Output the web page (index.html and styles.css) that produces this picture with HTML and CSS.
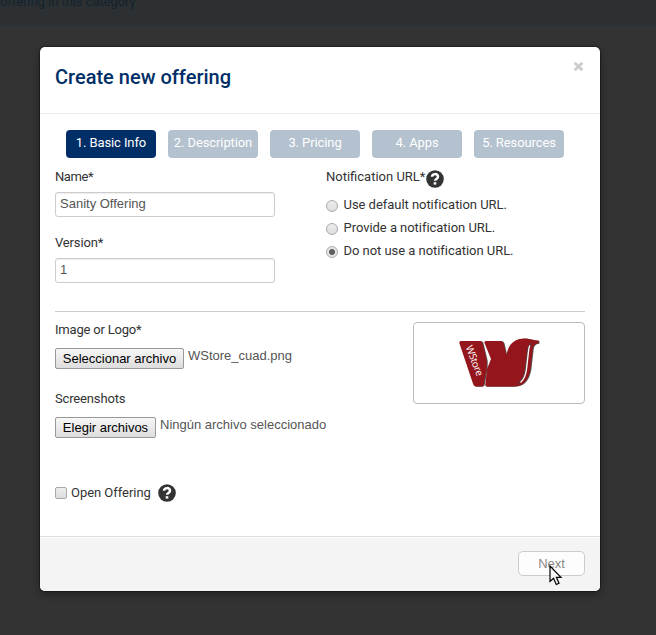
FILE: index.html
```html
<!DOCTYPE html>
<html lang="en">
<head>
<meta charset="utf-8">
<title>Create new offering</title>
<link rel="stylesheet" href="styles.css">
</head>
<body>
<div class="page-banner">offering in this category</div>
<div class="page-panel"></div>
<section class="modal">
  <header class="modal-header">
    <h3>Create new offering</h3>
    <svg class="close" viewBox="0 0 10 10"><path d="M1.5 1.5 8.5 8.5M8.5 1.5 1.5 8.5"/></svg>
  </header>
  <div class="modal-body">
    <nav class="steps">
      <span class="step active">1. Basic Info</span>
      <span class="step description">2. Description</span>
      <span class="step">3. Pricing</span>
      <span class="step">4. Apps</span>
      <span class="step">5. Resources</span>
    </nav>
    <div class="columns">
      <div class="fields">
        <div class="label tight">Name*</div>
        <div class="input">Sanity Offering</div>
        <div class="label">Version*</div>
        <div class="input">1</div>
      </div>
      <div class="notification">
        <div class="label with-help"><span class="notify-label">Notification URL*</span><svg class="help" viewBox="0 0 18 18"><circle cx="9" cy="9" r="8.8"/><path d="M6 6.8C6.2 3.3 12 3.2 12 6.7 12 8.9 9 8.9 9 10.8"/><rect x="7.7" y="12.2" width="2.6" height="2.4"/></svg></div>
        <div class="option"><i class="radio"></i><span>Use default notification URL.</span></div>
        <div class="option"><i class="radio"></i><span>Provide a notification URL.</span></div>
        <div class="option"><i class="radio checked"></i><span>Do not use a notification URL.</span></div>
      </div>
    </div>
    <div class="columns media">
      <div class="files">
        <div class="label image-label">Image or Logo*</div>
        <div class="file"><span class="file-button choose">Seleccionar archivo</span><span class="file-name">WStore_cuad.png</span></div>
        <div class="label shots-label">Screenshots</div>
        <div class="file"><span class="file-button pick">Elegir archivos</span><span class="file-name">Ningún archivo seleccionado</span></div>
      </div>
      <div class="preview">
        <svg viewBox="0 0 170 80">
          <defs>
            <g id="mark">
              <path d="M45.300 20Q45 18 47 18H66Q68 18 68.600 20L72.800 37.500V44L70 61Q69.600 63.500 67.500 63.500H62Q60 63.500 59.200 61.200Z"/>
              <path d="M70.500 20Q70 18 72 18H86.500Q89 18 89.600 20L92.500 32.500C94 21 101 15.500 110 15.500 116 15.500 119 17.500 124.500 17.500V20.500Q119.500 20.500 118.800 26L116.500 46C114.500 58 109 63.500 99 63.500H73Q71 63.500 71.300 61.500L73 46 77 36Z"/>
            </g>
          </defs>
          <use class="logo-shadow" href="#mark" x=".9" y=".3"/>
          <use class="logo-shape" href="#mark"/>
          <path class="logo-curve-dark" d="M118 20.500Q114 21.500 113.300 29L111.300 46Q110 56 103.500 60.500"/>
          <path class="logo-curve" d="M115.800 22.500Q114.700 25 114.300 30L112.500 46Q111.500 55 106.500 59.500"/>
          <text x="51.500" y="24" transform="rotate(69 51.500 24)" textLength="32">WStore</text>
        </svg>
      </div>
    </div>
    <div class="open-row"><i class="checkbox"></i><span>Open Offering</span><svg class="help" viewBox="0 0 18 18"><circle cx="9" cy="9" r="8.8"/><path d="M6 6.8C6.2 3.3 12 3.2 12 6.7 12 8.9 9 8.9 9 10.8"/><rect x="7.7" y="12.2" width="2.6" height="2.4"/></svg></div>
  </div>
  <footer class="modal-footer"><span class="next">Next</span></footer>
</section>
<svg class="cursor" viewBox="0 0 14 21"><path d="M1 1V16.500L4.500 13.300 7.300 19.500 10 18.300 7.400 12.300H12Z"/></svg>
</body>
</html>
```
FILE: styles.css
```css
* { box-sizing: border-box; }
body {
  margin: 0;
  height: 635px;
  overflow: hidden;
  position: relative;
  background: #333;
  color: #333;
  font: 13px/20px Roboto, sans-serif;
}
.page-banner {
  height: 27px;
  border-bottom: 1px solid #2c3638;
  background: #2c3032;
  color: #14232e;
  font-size: 13px;
  line-height: 4px;
  letter-spacing: -.05px;
}
.page-panel { height: 608px; background: #333; }
.modal {
  position: absolute;
  left: 40px;
  top: 47px;
  width: 560px;
  height: 544px;
  border-radius: 5px;
  background: #fff;
  box-shadow: 0 0 0 1px rgba(0, 0, 0, .3), 0 3px 9px rgba(0, 0, 0, .4);
}
.modal-header {
  display: flex;
  justify-content: space-between;
  height: 67px;
  padding: 14px 16px 0 15px;
  border-bottom: 1px solid #eee;
}
h3 {
  margin: 0;
  padding-top: 1px;
  color: #002e67;
  font-size: 20px;
  font-weight: 500;
  line-height: 30px;
}
.close { width: 11px; height: 11px; }
.close path { stroke: #ccc; stroke-width: 2.6; fill: none; }
.modal-body { height: 422px; padding: 16px 15px 0; }
.steps { display: flex; gap: 12px; height: 28px; margin-left: 11px; }
.step {
  width: 90px;
  border-radius: 4px;
  background: #b4c1ce;
  color: #fff;
  text-align: center;
  line-height: 26px;
  letter-spacing: -.1px;
}
.step.active { background: #002e67; }
.columns { display: flex; height: 154px; border-bottom: 1px solid #ccc; }
.fields { width: 271px; padding-top: 9px; }
.label { height: 20px; letter-spacing: -.15px; }
.label.tight { letter-spacing: -.4px; }
.input {
  width: 220px;
  height: 25px;
  margin: 5px 0 16px;
  padding-left: 4px;
  border: 1px solid #ccc;
  border-radius: 3px;
  background: #fff;
  box-shadow: inset 0 1px 1px rgba(0, 0, 0, .075);
  color: #555;
  font: 13px/22px "Liberation Sans", sans-serif;
}
.notification { padding-top: 9px; }
.with-help { display: flex; margin-bottom: 8px; }
.notify-label { width: 100px; letter-spacing: 0; }
.help { width: 18px; height: 18px; margin-top: 3px; }
.help circle { fill: #333; }
.help path { fill: none; stroke: #fff; stroke-width: 2.5; }
.help rect { fill: #fff; }
.option { display: flex; height: 23px; letter-spacing: -.04px; }
.radio {
  width: 12px;
  height: 12px;
  margin: 5px 5.500px 0 0;
  border: 1px solid #aaa;
  border-radius: 50%;
  background: linear-gradient(#ececec, #dedede);
}
.radio.checked { background: radial-gradient(circle, #606060 0 2.7px, #e6e6e6 3.3px); }
.media { height: 141px; justify-content: space-between; border: 0; }
.files { padding-top: 8px; }
.file { display: flex; height: 49px; padding-top: 8px; font: 13px/16px "Liberation Sans", sans-serif; }
.file-button {
  height: 21px;
  border: 1px solid #999;
  border-radius: 2px;
  background: linear-gradient(#f7f7f7, #ddd);
  color: #000;
  line-height: 20px;
  text-align: center;
}
.choose { width: 129px; }
.pick { width: 101px; }
.file-name { margin-left: 4px; color: #555; }
.image-label { letter-spacing: -.2px; }
.preview { width: 172px; height: 82px; margin-top: 10px; border: 1px solid #bbb; border-radius: 4px; }
.preview svg { display: block; width: 170px; height: 80px; }
.preview text { fill: #fff; font: 10px "Open Sans", sans-serif; }
.logo-shadow { fill: #555; }
.logo-shape { fill: #94151b; }
.logo-curve, .logo-curve-dark { fill: none; }
.logo-curve-dark { stroke: #444; stroke-width: 1; }
.logo-curve { stroke: #fff; stroke-width: 1.4; }
.open-row { display: flex; height: 20px; margin-top: 30px; letter-spacing: -.04px; }
.checkbox { width: 12px; height: 12px; margin: 4px 4px 0 0; border: 1px solid #aaa; border-radius: 2px; background: linear-gradient(#eee, #ddd); }
.open-row .help { margin: 1px 0 0 7px; }
.modal-footer {
  display: flex;
  justify-content: flex-end;
  height: 55px;
  padding: 14px 15px 0;
  border-top: 1px solid #ddd;
  border-radius: 0 0 5px 5px;
  background: #f4f4f4;
  box-shadow: inset 0 1px 0 #fff;
}
.next {
  width: 67px;
  height: 25px;
  border: 1px solid #ccc;
  border-radius: 5px;
  background: #fdfdfd;
  color: #888;
  font: 13px/24px "Liberation Sans", sans-serif;
  text-align: center;
}
.cursor { position: absolute; left: 549px; top: 565px; width: 14px; height: 21px; }
.cursor path { fill: #f5f5f5; stroke: #000; stroke-width: 1.2; }
```
